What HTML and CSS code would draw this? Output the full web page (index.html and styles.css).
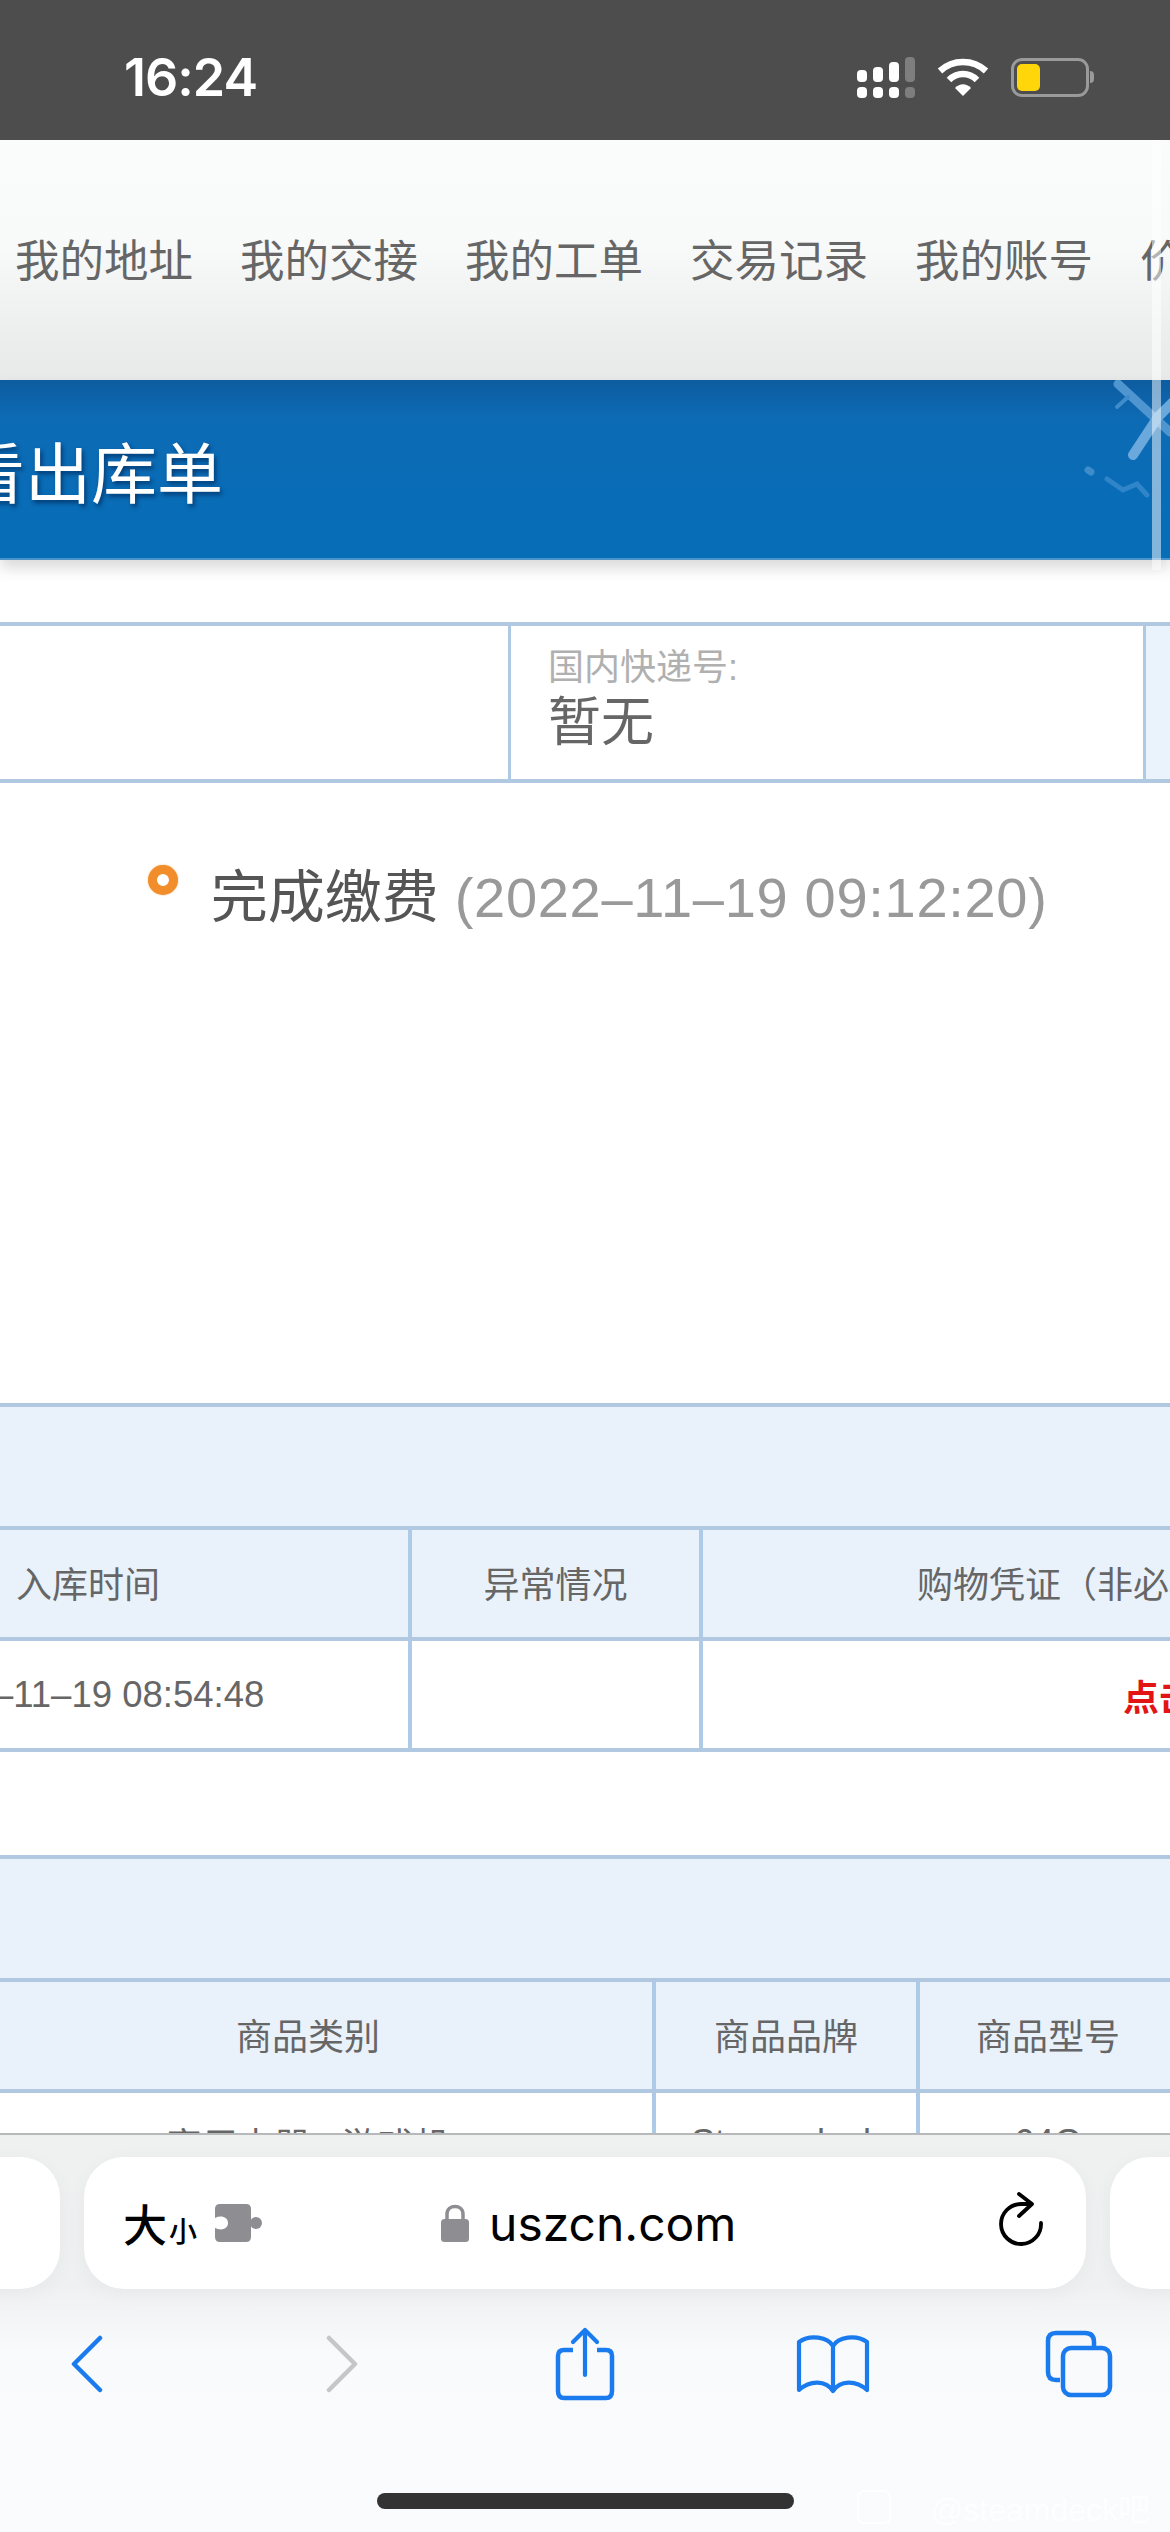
FILE: index.html
```html
<!DOCTYPE html>
<html lang="zh-CN">
<head>
    <meta charset="UTF-8">
    <meta name="viewport" content="width=device-width, initial-scale=1.0">
    <title>查看出库单</title>
    <link rel="stylesheet" href="styles.css">
</head>
<body>

<div class="phone">

    <div class="status-bar">
        <span class="clock">16:24</span>
        <div class="status-icons">
            <svg class="signal" width="58" height="41" viewBox="0 0 58 41">
                <rect x="0" y="13" width="10" height="12" rx="4" fill="#fff"/>
                <rect x="16" y="10" width="10" height="15" rx="4" fill="#fff"/>
                <rect x="32" y="5" width="10" height="20" rx="4" fill="#fff"/>
                <rect x="48" y="0" width="10" height="25" rx="4" fill="#7e7e7e"/>
                <rect x="0" y="30" width="10" height="11" rx="4" fill="#fff"/>
                <rect x="16" y="30" width="10" height="11" rx="4" fill="#fff"/>
                <rect x="32" y="30" width="10" height="11" rx="4" fill="#fff"/>
                <rect x="48" y="30" width="10" height="11" rx="4" fill="#7e7e7e"/>
            </svg>
            <svg class="wifi" width="52" height="38" viewBox="0 0 52 38">
                <path d="M3 13 C16 1 36 1 49 13" fill="none" stroke="#fff" stroke-width="6.5"/>
                <path d="M12 22 C20 14 32 14 40 22" fill="none" stroke="#fff" stroke-width="6.5"/>
                <path d="M18 30 C23 25 29 25 34 30 L26 38 Z" fill="#fff"/>
            </svg>
            <div class="battery">
                <div class="battery-level"></div>
            </div>
            <div class="battery-nub"></div>
        </div>
    </div>

    <div class="page">
        <nav class="top-nav">
            <a>我的地址</a>
            <a>我的交接</a>
            <a>我的工单</a>
            <a>交易记录</a>
            <a>我的账号</a>
            <a>价格</a>
        </nav>

        <div class="title-bar">
            <h1>查看出库单</h1>
            <svg class="title-deco" width="100" height="130" viewBox="0 0 100 130">
                <path d="M38 4 L90 52" fill="none" stroke="#4f96d0" stroke-width="9" stroke-linecap="round"/>
                <path d="M53 75 L78 37 L95 20" fill="none" stroke="#6ba8dc" stroke-width="10" stroke-linecap="round"/>
                <path d="M37 27 L48 17" fill="none" stroke="#3f8cca" stroke-width="4" stroke-linecap="round"/>
                <path d="M8 90 L11 92" fill="none" stroke="#3f8cca" stroke-width="7" stroke-linecap="round"/>
                <path d="M27 99 L43 110 L57 104 L67 115" fill="none" stroke="#2f85c8" stroke-width="5" stroke-linecap="round"/>
            </svg>
        </div>

        <div class="info-row">
            <div class="info-cell info-blank"></div>
            <div class="info-cell info-express">
                <span class="info-label">国内快递号:</span>
                <span class="info-value">暂无</span>
            </div>
            <div class="info-cell info-next"></div>
        </div>

        <div class="timeline">
            <span class="timeline-dot"></span>
            <span class="timeline-text">完成缴费</span>
            <span class="timeline-date">(2022–11–19 09:12:20)</span>
        </div>

        <table class="data-table stock-table">
            <colgroup>
                <col class="stock-col-time">
                <col class="stock-col-state">
                <col class="stock-col-proof">
            </colgroup>
            <tr class="table-caption"><th colspan="3"></th></tr>
            <tr>
                <th>入库时间</th>
                <th>异常情况</th>
                <th class="proof-head">购物凭证&#xFF08;非必须&#xFF09;</th>
            </tr>
            <tr>
                <td class="stock-date">2022–11–19 08:54:48</td>
                <td></td>
                <td class="proof-link">点击</td>
            </tr>
        </table>

        <table class="data-table goods-table">
            <colgroup>
                <col class="goods-col-type">
                <col class="goods-col-brand">
                <col class="goods-col-model">
            </colgroup>
            <tr class="table-caption"><th colspan="3"></th></tr>
            <tr>
                <th>商品类别</th>
                <th>商品品牌</th>
                <th>商品型号</th>
            </tr>
            <tr class="goods-row">
                <td>家用电器 - 游戏机</td>
                <td>Steam deck</td>
                <td>64G</td>
            </tr>
        </table>

        <div class="scroll-thumb"></div>
    </div>

    <div class="safari">
        <div class="tabs-row">
            <div class="url-pill url-prev"></div>
            <div class="url-pill url-main">
                <span class="aa">大<small>小</small></span>
                <svg class="puzzle" width="48" height="38" viewBox="0 0 48 38">
                    <path fill-rule="evenodd" d="M5 0 H31 Q36 0 36 5 V33 Q36 38 31 38 H5 Q0 38 0 33 V24 C6 27 13 25 13 19 C13 13 6 11 0 14 V5 Q0 0 5 0 Z" fill="#8e8d92"/>
                    <circle cx="41" cy="19" r="6" fill="#8e8d92"/>
                    <rect x="34" y="17" width="4" height="4" fill="#8e8d92"/>
                </svg>
                <svg class="lock" width="28" height="38" viewBox="0 0 28 38">
                    <path d="M6 17 V10 C6 0 22 0 22 10 V17" fill="none" stroke="#8e8d92" stroke-width="3.5"/>
                    <rect x="0" y="15" width="28" height="23" rx="3.5" fill="#8e8d92"/>
                </svg>
                <span class="url-text">uszcn.com</span>
                <svg class="reload" width="46" height="54" viewBox="0 0 46 54">
                    <path d="M33 12 H23 A20 20 0 1 0 43 31" fill="none" stroke="#000" stroke-width="3.8" stroke-linecap="round"/>
                    <path d="M21 2 L34 12 L21 24" fill="none" stroke="#000" stroke-width="3.8" stroke-linecap="round" stroke-linejoin="round"/>
                </svg>
            </div>
            <div class="url-pill url-next"></div>
        </div>

        <div class="toolbar">
            <svg width="36" height="58" viewBox="0 0 36 58">
                <path d="M31 3 L5 29 L31 55" fill="none" stroke="#1a7bef" stroke-width="4.5" stroke-linecap="round" stroke-linejoin="round"/>
            </svg>
            <svg width="36" height="58" viewBox="0 0 36 58">
                <path d="M5 3 L31 29 L5 55" fill="none" stroke="#c5c6c8" stroke-width="4.5" stroke-linecap="round" stroke-linejoin="round"/>
            </svg>
            <svg width="60" height="74" viewBox="0 0 60 74">
                <path d="M18 23 H9 Q3 23 3 29 V64 Q3 71 9 71 H51 Q57 71 57 64 V29 Q57 23 51 23 H42" fill="none" stroke="#1a7bef" stroke-width="4.5"/>
                <path d="M30 3 V48 M18 15 L30 3 L42 15" fill="none" stroke="#1a7bef" stroke-width="4.2" stroke-linecap="round" stroke-linejoin="round"/>
            </svg>
            <svg width="74" height="60" viewBox="0 0 74 60">
                <path d="M37 12 C32 3 14 0 3 8 V56 C14 46 30 46 37 57 C44 46 60 46 71 56 V8 C60 0 42 3 37 12 Z M37 12 V57" fill="none" stroke="#1a7bef" stroke-width="4.2" stroke-linejoin="round"/>
            </svg>
            <svg width="68" height="68" viewBox="0 0 68 68">
                <path d="M15 50 H11 Q3 50 3 42 V11 Q3 3 11 3 H40 Q49 3 49 12 V17" fill="none" stroke="#1a7bef" stroke-width="4.5"/>
                <rect x="18" y="18" width="47" height="47" rx="8" fill="none" stroke="#1a7bef" stroke-width="4.5"/>
            </svg>
        </div>

        <div class="home-bar"></div>
        <div class="watermark">
            <span class="watermark-box"></span>
            <span>@steamdeck吧</span>
        </div>
    </div>

</div>

</body>
</html>
```

FILE: styles.css
```css
* {
    box-sizing: border-box;
}

body {
    margin: 0;
    padding: 0;
    background-color: #fff;
    font-family: "Liberation Sans", "Noto Sans CJK SC", sans-serif;
}

.phone {
    width: 1170px;
    height: 2532px;
    display: flex;
    flex-direction: column;
    overflow: hidden;
    position: relative;
}

/* barra de estado */
.status-bar {
    height: 140px;
    flex: none;
    background-color: #4d4d4d;
    display: flex;
    align-items: center;
    justify-content: space-between;
    padding: 14px 76px 0 124px;
    color: #fff;
}

.clock {
    font-family: "Inter", "Liberation Sans", sans-serif;
    font-size: 52px;
    font-weight: 600;
    letter-spacing: -1px;
}

.status-icons {
    display: flex;
    align-items: center;
}

.signal {
    margin-right: 22px;
}

.wifi {
    margin-right: 22px;
}

.battery {
    width: 78px;
    height: 39px;
    border: 3px solid #9a9a9a;
    border-radius: 11px;
    padding: 3px;
}

.battery-level {
    width: 23px;
    height: 27px;
    border-radius: 5px;
    background-color: #ffd60a;
}

.battery-nub {
    width: 4px;
    height: 12px;
    margin-left: 1px;
    border-radius: 0 6px 6px 0;
    background-color: #9a9a9a;
}

/* contenido */
.page {
    flex: 1;
    min-height: 0;
    overflow: hidden;
    position: relative;
    background-color: #fff;
}

.top-nav {
    height: 240px;
    display: flex;
    align-items: center;
    gap: 47px;
    padding: 0 0 5px 15px;
    background: linear-gradient(#fafbfb 0%, #f8f9f9 45%, #ebecec 85%, #e8e9e9 100%);
    font-size: 44.5px;
    color: #666;
    white-space: nowrap;
    overflow: hidden;
}

.top-nav a {
    flex: none;
}

.title-bar {
    height: 180px;
    position: relative;
    overflow: hidden;
    display: flex;
    align-items: center;
    background: linear-gradient(#0d5c9f 0%, #0d6bb5 22%, #066db7 100%);
    border-bottom: 2px solid #4a93cd;
    box-shadow: 0 8px 14px rgba(0, 0, 0, 0.15);
}

.title-bar h1 {
    margin: 0 0 0 -107px;
    font-size: 66px;
    font-weight: 400;
    color: #fff;
    text-shadow: 2px 3px 4px rgba(0, 40, 90, 0.7);
    white-space: nowrap;
}

.title-deco {
    position: absolute;
    top: 0;
    right: -10px;
}

.info-row {
    display: flex;
    height: 161px;
    margin-top: 62px;
    border-top: 4px solid #b0c8e0;
    border-bottom: 4px solid #b0c8e0;
}

.info-cell {
    border-right: 3px solid #adc9e4;
}

.info-blank {
    width: 511px;
}

.info-express {
    width: 635px;
    padding: 22px 0 0 37px;
    display: flex;
    flex-direction: column;
}

.info-label {
    font-size: 36px;
    line-height: 40px;
    color: #b0b0b0;
}

.info-value {
    font-size: 53px;
    line-height: 70px;
    color: #666;
}

.info-next {
    flex: 1;
    border-right: none;
    background-color: #eaf2fb;
}

.timeline {
    height: 620px;
    padding: 78px 0 0 148px;
    font-size: 57px;
    line-height: 72px;
    white-space: nowrap;
}

.timeline-dot {
    display: inline-block;
    width: 30px;
    height: 30px;
    margin-right: 17px;
    border: 9px solid #f18d2b;
    border-radius: 50%;
    vertical-align: 22px;
    background-color: #fff;
    box-shadow: 0 0 2px #f8b877;
}

.timeline-text {
    color: #555;
}

.timeline-date {
    font-size: 56px;
    color: #999;
    letter-spacing: 0.7px;
    margin-left: 0;
}

/* tablas */
.data-table {
    table-layout: fixed;
    border-collapse: collapse;
    font-size: 36px;
    color: #666;
}

.data-table th,
.data-table td {
    height: 111px;
    padding: 0;
    font-weight: 400;
    text-align: center;
    white-space: nowrap;
    overflow: hidden;
    border: 4px solid #b0c8e0;
    border-left-color: #adcbe8;
    border-right-color: #adcbe8;
}

.data-table th {
    padding-bottom: 3px;
    background-color: #e9f2fb;
}

.data-table .table-caption th {
    height: 123px;
}

.stock-table {
    width: 1921px;
    margin-left: -236px;
    margin-bottom: 103px;
}

.stock-col-time {
    width: 644px;
}

.stock-col-state {
    width: 291px;
}

.stock-col-proof {
    width: 986px;
}

.data-table .stock-date {
    font-size: 36.5px;
}

.data-table .proof-head {
    text-align: left;
    padding-left: 214px;
}

.data-table .proof-link {
    text-align: left;
    padding-left: 420px;
    color: #e31414;
    font-weight: 700;
}

.goods-table {
    width: 1216px;
    margin-left: -40px;
}

.goods-col-type {
    width: 692px;
}

.goods-col-brand {
    width: 264px;
}

.goods-col-model {
    width: 260px;
}

.goods-row td {
    padding-bottom: 8px;
    vertical-align: middle;
}

.scroll-thumb {
    position: absolute;
    top: 0;
    right: 9px;
    width: 9px;
    height: 430px;
    background-color: rgba(255, 255, 255, 0.5);
}

/* barra inferior de safari */
.safari {
    height: 399px;
    flex: none;
    position: relative;
    border-top: 2px solid #b8b9ba;
    background: linear-gradient(#eff0f0 0%, #eff0f1 38%, #f8fafb 55%, #f9fbfc 100%);
}

.tabs-row {
    display: flex;
    gap: 24px;
    margin: 22px -37px 0 -37px;
    height: 132px;
}

.url-pill {
    background-color: #fff;
    border-radius: 40px;
    box-shadow: 0 4px 20px rgba(0, 0, 0, 0.04);
}

.url-prev,
.url-next {
    flex: 1;
}

.url-main {
    width: 1002px;
    flex: none;
    display: flex;
    align-items: center;
    padding: 0 42px 0 39px;
}

.aa {
    width: 92px;
    flex: none;
    font-size: 44px;
    color: #000;
    font-family: "Noto Sans CJK SC", sans-serif;
    font-weight: 500;
}

.aa small {
    font-size: 28px;
    margin-left: 2px;
}

.puzzle {
    flex: none;
}

.lock {
    flex: none;
    margin-left: 178px;
}

.url-text {
    margin-left: 20px;
    font-family: "Inter", "Liberation Sans", sans-serif;
    font-size: 48px;
    color: #000;
}

.reload {
    flex: none;
    margin-left: auto;
    margin-bottom: 8px;
}

.toolbar {
    height: 130px;
    margin-top: 10px;
    display: grid;
    grid-template-columns: 255px 231px 241px 249px 1fr;
    align-items: center;
    padding-left: 69px;
}

.home-bar {
    position: absolute;
    left: 377px;
    top: 358px;
    width: 417px;
    height: 16px;
    border-radius: 8px;
    background-color: #333;
}

.watermark {
    position: absolute;
    right: 20px;
    top: 349px;
    display: flex;
    align-items: center;
    gap: 40px;
    font-size: 32px;
    color: rgba(255, 255, 255, 0.85);
}

.watermark-box {
    width: 34px;
    height: 34px;
    border: 2px solid rgba(255, 255, 255, 0.85);
    border-radius: 7px;
}
```
